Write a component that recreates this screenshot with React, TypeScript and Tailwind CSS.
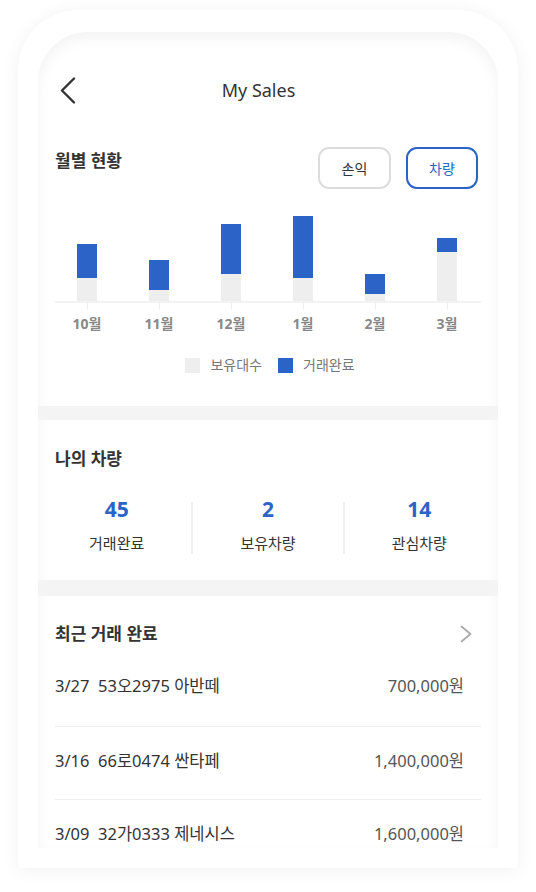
const MONTHS = [
  { label: "10월", done: 34, owned: 23 },
  { label: "11월", done: 30, owned: 11 },
  { label: "12월", done: 50, owned: 27 },
  { label: "1월", done: 62, owned: 23 },
  { label: "2월", done: 20, owned: 7 },
  { label: "3월", done: 14, owned: 49 },
];

const STATS = [
  { value: 45, label: "거래완료" },
  { value: 2, label: "보유차량" },
  { value: 14, label: "관심차량" },
];

const DEALS = [
  { date: "3/27", car: "53오2975 아반떼", price: "700,000원" },
  { date: "3/16", car: "66로0474 싼타페", price: "1,400,000원" },
  { date: "3/09", car: "32가0333 제네시스", price: "1,600,000원" },
];

export default function App() {
  return (
    <div
      className="min-h-[892px] bg-white pt-[10px]"
      style={{ fontFamily: '"Noto Sans", "Noto Sans CJK KR", sans-serif' }}
    >
      {/* phone frame */}
      <div className="ml-[18px] h-[858px] w-[500px] rounded-t-[60px] bg-white px-[20px] pt-[22px] shadow-[0_2px_18px_rgba(0,0,0,0.06)]">
        <div className="h-[816px] w-[460px] overflow-hidden rounded-t-[50px] shadow-[inset_0_6px_14px_rgba(0,0,0,0.05)]">
          {/* Header */}
          <div className="relative mt-[30px] flex h-[56px] items-center justify-center pr-[19px]">
            <svg
              className="absolute left-[22px] top-[15px]"
              width="16"
              height="27"
              viewBox="0 0 16 27"
              fill="none"
              stroke="#333"
              strokeWidth="2.4"
              strokeLinecap="round"
              strokeLinejoin="round"
            >
              <polyline points="14,1.5 2,13.5 14,25.5" />
            </svg>
            <span className="text-[18px] leading-[26px] text-[#333]">My Sales</span>
          </div>

          {/* 월별 현황 */}
          <div className="mt-[29px] flex h-[42px] items-start justify-between px-[17px]">
            <h2 className="mt-[2px] text-[17px] leading-[24px] font-bold text-[#333]">월별 현황</h2>
            <div className="flex gap-[15px] pr-[3px]">
              <button className="h-[42px] w-[73px] rounded-[11px] border-2 border-[#dcdcdc] text-[14px] text-[#333]">
                손익
              </button>
              <button className="h-[42px] w-[72px] rounded-[11px] border-2 border-[#2b63c6] text-[14px] text-[#2b63c6]">
                차량
              </button>
            </div>
          </div>

          {/* Chart */}
          <div className="mt-[11px]">
            <div className="ml-[13px] mr-[15px] grid h-[101px] grid-cols-6">
              {MONTHS.map((m) => (
                <div key={m.label} className="flex flex-col items-center justify-end">
                  <div className="w-[20px] bg-[#2b63c6]" style={{ height: m.done }} />
                  <div className="w-[20px] bg-[#eeeeee]" style={{ height: m.owned }} />
                </div>
              ))}
            </div>
            <div className="mx-[17px] h-[2px] bg-[#f3f3f3]" />
            <div className="ml-[13px] mr-[15px] grid grid-cols-6">
              {MONTHS.map((m) => (
                <div key={m.label} className="flex flex-col items-center">
                  <div className="h-[6px] w-px bg-[#eeeeee]" />
                  <span className="mt-[5px] text-[14px] leading-[20px] font-bold text-[#888]">{m.label}</span>
                </div>
              ))}
            </div>
            <div className="mt-[21px] flex h-[20px] items-center justify-center gap-[10px] pl-[4px] text-[14px] leading-[20px] text-[#777]">
              <span className="h-[15px] w-[15px] bg-[#eeeeee]" />
              <span>보유대수</span>
              <span className="ml-[6px] h-[15px] w-[15px] bg-[#2b63c6]" />
              <span>거래완료</span>
            </div>
          </div>

          <div className="mt-[31px] h-[14px] bg-[#f4f4f4]" />

          {/* 나의 차량 */}
          <div className="px-[17px] pt-[27px]">
            <h2 className="text-[17px] leading-[24px] font-bold text-[#333]">나의 차량</h2>
          </div>
          <div className="mt-[31px] flex px-[4px]">
            {STATS.map((s, i) => (
              <div
                key={s.label}
                className={`flex h-[52px] flex-1 flex-col items-center ${i > 0 ? "border-l-2 border-[#eeeeee]" : ""}`}
              >
                <span className="-mt-[6px] text-[21px] leading-[26px] font-bold text-[#2b63c6]">{s.value}</span>
                <span className="mt-[10px] text-[15px] leading-[22px] text-[#333]">{s.label}</span>
              </div>
            ))}
          </div>

          <div className="mt-[26px] h-[16px] bg-[#f4f4f4]" />

          {/* 최근 거래 완료 */}
          <div className="px-[17px]">
            <div className="flex h-[76px] items-center justify-between">
              <h2 className="text-[17px] leading-[24px] font-bold text-[#333]">최근 거래 완료</h2>
              <svg
                className="mr-[9px]"
                width="12"
                height="18"
                viewBox="0 0 12 18"
                fill="none"
                stroke="#aaa"
                strokeWidth="1.8"
                strokeLinecap="round"
                strokeLinejoin="round"
              >
                <polyline points="1.5,1.5 10.5,9 1.5,16.5" />
              </svg>
            </div>
            {DEALS.map((d, i) => (
              <div
                key={d.date}
                className={`flex items-start justify-between pr-[17px] text-[16.5px] leading-[22px] ${
                  i < DEALS.length - 1 ? "border-b border-[#eeeeee]" : ""
                } ${i === 0 ? "-mt-[4px] h-[59px] pt-[7px]" : "h-[73px] pt-[23px]"}`}
              >
                <span className="text-[#333]">
                  {d.date}&nbsp;&nbsp;{d.car}
                </span>
                <span className="text-[#555]">{d.price}</span>
              </div>
            ))}
          </div>
        </div>
      </div>
    </div>
  );
}
